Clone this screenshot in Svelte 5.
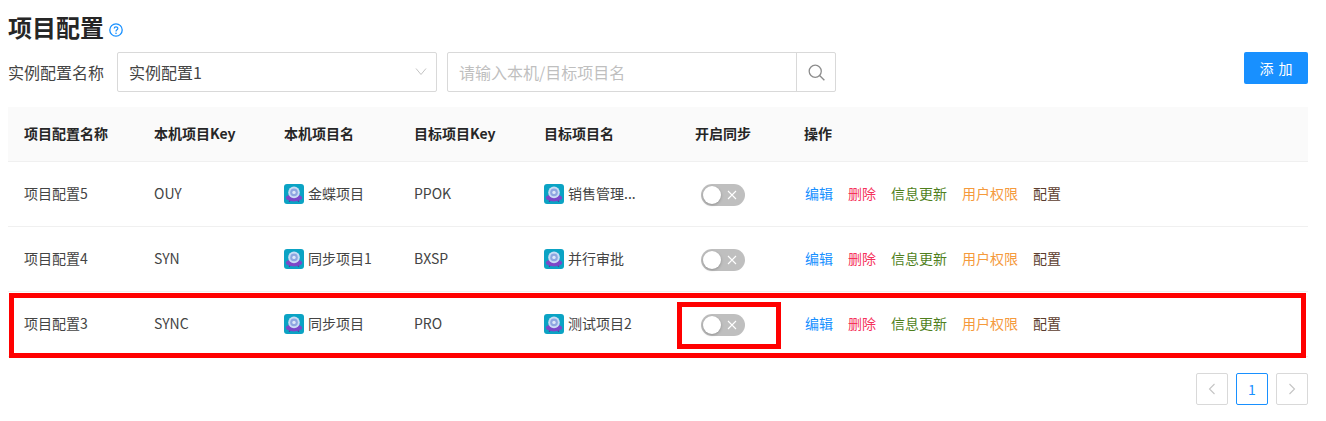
<script>
    const rows = [
        { name: "项目配置5", key: "OUY", local: "金蝶项目", targetKey: "PPOK", target: "销售管理..." },
        { name: "项目配置4", key: "SYN", local: "同步项目1", targetKey: "BXSP", target: "并行审批" },
        { name: "项目配置3", key: "SYNC", local: "同步项目", targetKey: "PRO", target: "测试项目2", marked: true },
    ];
    const actions = [
        { label: "编辑", cls: "blue" },
        { label: "删除", cls: "red" },
        { label: "信息更新", cls: "green" },
        { label: "用户权限", cls: "orange" },
        { label: "配置", cls: "brown" },
    ];
</script>

{#snippet projectIcon()}
    <svg class="project-icon" viewBox="0 0 20 20" aria-hidden="true">
        <rect width="20" height="20" rx="3" fill="#0ba3c4" />
        <path d="M5.2 17.8 L6.8 15 M14.8 17.8 L13.2 15" stroke="#5b2fa0" stroke-width="1.3" />
        <ellipse cx="10" cy="13.8" rx="8.2" ry="3.6" fill="#7d48c8" />
        <circle cx="10" cy="8.4" r="5.8" fill="#c9dcf5" />
        <circle cx="10" cy="8.4" r="3.8" fill="#8ea6e0" />
        <circle cx="10" cy="8.4" r="1.7" fill="#dde8f8" />
    </svg>
{/snippet}

<main class="page">
    <header class="title-row">
        <h1>项目配置</h1>
        <svg class="help" viewBox="0 0 14 14" aria-hidden="true">
            <circle cx="7" cy="7" r="6.2" fill="none" stroke="#1890ff" stroke-width="1.3" />
            <path d="M5.2 5.6 C5.2 3.4 8.8 3.4 8.8 5.5 C8.8 6.9 7 6.8 7 8.4" fill="none" stroke="#1890ff" stroke-width="1.2" />
            <circle cx="7" cy="10.2" r="0.8" fill="#1890ff" />
        </svg>
    </header>

    <div class="toolbar">
        <span class="filter-label">实例配置名称</span>
        <div class="select">
            <span>实例配置1</span>
            <svg class="chevron" viewBox="0 0 12 12" aria-hidden="true">
                <path d="M1 2.5 L6 8.5 L11 2.5" fill="none" stroke="#c4c4c4" stroke-width="1" />
            </svg>
        </div>
        <div class="search">
            <span class="placeholder">请输入本机/目标项目名</span>
            <span class="search-btn">
                <svg viewBox="0 0 16 16" aria-hidden="true">
                    <circle cx="6.8" cy="6.8" r="5.7" fill="none" stroke="#8c8c8c" stroke-width="1.2" />
                    <path d="M10.9 10.9 L15.4 15.4" stroke="#8c8c8c" stroke-width="1.3" />
                </svg>
            </span>
        </div>
        <button class="add" type="button">添 加</button>
    </div>

    <div class="table-wrap">
        <table>
            <colgroup>
                <col class="c" /><col class="c" /><col class="c" /><col class="c" /><col class="c" /><col class="c" /><col />
            </colgroup>
            <thead>
                <tr>
                    <th>项目配置名称</th>
                    <th>本机项目Key</th>
                    <th>本机项目名</th>
                    <th>目标项目Key</th>
                    <th>目标项目名</th>
                    <th class="center">开启同步</th>
                    <th>操作</th>
                </tr>
            </thead>
            <tbody>
                {#each rows as row}
                    <tr>
                        <td>{row.name}</td>
                        <td>{row.key}</td>
                        <td><span class="with-icon">{@render projectIcon()}{row.local}</span></td>
                        <td>{row.targetKey}</td>
                        <td><span class="with-icon">{@render projectIcon()}{row.target}</span></td>
                        <td class="center">
                            <span class="switch">
                                <span class="knob"></span>
                                <svg class="off" viewBox="0 0 10 10" aria-hidden="true">
                                    <path d="M1 1 L9 9 M9 1 L1 9" stroke="#fff" stroke-width="1.1" />
                                </svg>
                            </span>
                        </td>
                        <td>
                            <span class="actions">
                                {#each actions as a}
                                    <span class={a.cls}>{a.label}</span>
                                {/each}
                            </span>
                        </td>
                    </tr>
                {/each}
            </tbody>
        </table>
        <!-- red annotations drawn over the screenshot -->
        <span class="mark mark-row"></span>
        <span class="mark mark-switch"></span>
    </div>

    <nav class="pager">
        <span class="page-btn">
            <svg viewBox="0 0 12 12" aria-hidden="true"><path d="M8.5 1 L3.5 6 L8.5 11" fill="none" stroke="#c4c4c4" stroke-width="1.1" /></svg>
        </span>
        <span class="page-btn current">1</span>
        <span class="page-btn">
            <svg viewBox="0 0 12 12" aria-hidden="true"><path d="M3.5 1 L8.5 6 L3.5 11" fill="none" stroke="#c4c4c4" stroke-width="1.1" /></svg>
        </span>
    </nav>
</main>

<style>
    :global(body) {
        margin: 0;
        background: #fff;
        font-family: "Noto Sans CJK SC", "Open Sans", sans-serif;
        color: #444;
    }

    .page {
        padding: 11px 18px 0 8px;
    }

    /* HEADER */
    .title-row {
        display: flex;
        align-items: center;
        gap: 5px;
        height: 32px;
    }

    h1 {
        margin: 0;
        font-size: 24px;
        line-height: 32px;
        font-weight: 700;
        color: #262626;
    }

    .help {
        width: 14px;
        height: 14px;
        margin-top: 6px;
    }

    /* TOOLBAR */
    .toolbar {
        display: flex;
        align-items: flex-start;
        margin-top: 9px;
    }

    .filter-label {
        width: 109px;
        font-size: 16px;
        line-height: 40px;
        color: #444;
    }

    .select,
    .search {
        box-sizing: border-box;
        height: 40px;
        border: 1px solid #d9d9d9;
        border-radius: 2px;
        display: flex;
        align-items: center;
        font-size: 16px;
    }

    .select {
        width: 320px;
        padding: 0 9px 0 11px;
        justify-content: space-between;
    }

    .chevron {
        width: 12px;
        height: 12px;
    }

    .search {
        width: 389px;
        margin-left: 10px;
        padding-left: 11px;
        justify-content: space-between;
    }

    .placeholder {
        color: #bfbfbf;
    }

    .search-btn {
        width: 38px;
        height: 38px;
        border-left: 1px solid #d9d9d9;
        display: flex;
        align-items: center;
        justify-content: center;
    }

    .search-btn svg {
        width: 17px;
        height: 17px;
    }

    .add {
        margin-left: auto;
        width: 64px;
        height: 32px;
        border: none;
        border-radius: 2px;
        background: #1890ff;
        color: #fff;
        font: inherit;
        font-size: 14px;
        word-spacing: 2px;
        padding: 0;
    }

    /* TABLE */
    .table-wrap {
        position: relative;
        margin-top: 15px;
    }

    table {
        width: 1300px;
        border-collapse: separate;
        border-spacing: 0;
        table-layout: fixed;
        font-size: 14px;
    }

    .c {
        width: 130px;
    }

    th,
    td {
        padding: 0 16px 2px;
        text-align: left;
        border-bottom: 1px solid #f0f0f0;
        white-space: nowrap;
    }

    th {
        height: 52px;
        background: #fafafa;
        color: #262626;
        font-weight: 700;
    }

    td {
        height: 62px;
        color: #444;
    }

    .center {
        text-align: center;
    }

    .with-icon {
        display: flex;
        align-items: center;
        gap: 4px;
    }

    .project-icon {
        width: 20px;
        height: 20px;
        flex: none;
        margin-top: 2px;
    }

    /* SWITCH */
    .switch {
        display: inline-flex;
        align-items: center;
        justify-content: flex-end;
        position: relative;
        width: 44px;
        height: 22px;
        margin-top: 4px;
        border-radius: 11px;
        background: #bfbfbf;
        vertical-align: middle;
    }

    .knob {
        position: absolute;
        left: 2px;
        top: 2px;
        width: 18px;
        height: 18px;
        border-radius: 50%;
        background: #fff;
        box-shadow: 0 1px 3px rgba(0, 0, 0, 0.25);
    }

    .off {
        width: 10px;
        height: 10px;
        margin-right: 8px;
    }

    .actions {
        display: inline-flex;
        gap: 15px;
        margin-left: 1px;
    }

    .blue { color: #1890ff; }
    .red { color: #f5325c; }
    .green { color: #4f7f1c; }
    .orange { color: #f59a3c; }
    .brown { color: #5c3d2e; }

    /* RED ANNOTATIONS */
    .mark {
        position: absolute;
        box-sizing: border-box;
        border: 5px solid #f00;
        pointer-events: none;
    }

    .mark-row {
        left: 1px;
        top: 186px;
        width: 1297px;
        height: 65px;
    }

    .mark-switch {
        left: 669px;
        top: 195px;
        width: 104px;
        height: 47px;
    }

    /* PAGER */
    .pager {
        display: flex;
        justify-content: flex-end;
        gap: 8px;
        margin-top: 16px;
    }

    .page-btn {
        box-sizing: border-box;
        width: 32px;
        height: 32px;
        border: 1px solid #d9d9d9;
        border-radius: 2px;
        display: flex;
        align-items: center;
        justify-content: center;
        font-size: 14px;
    }

    .page-btn svg {
        width: 12px;
        height: 12px;
    }

    .current {
        border-color: #1890ff;
        color: #1890ff;
    }
</style>
